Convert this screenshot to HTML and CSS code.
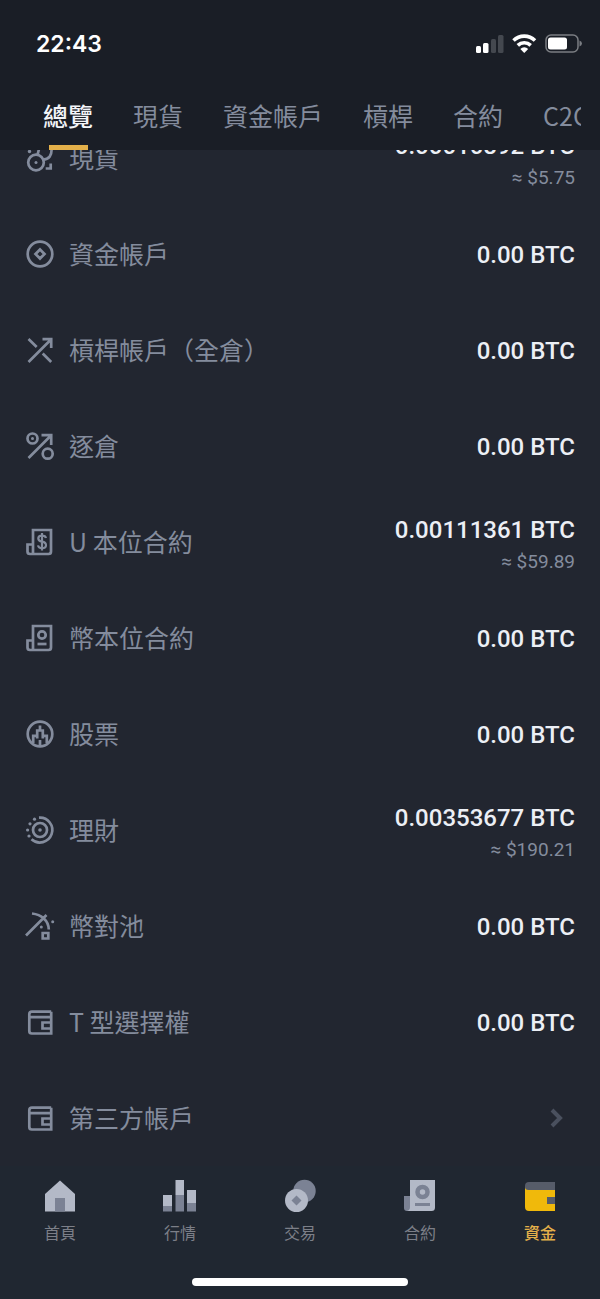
FILE: index.html
```html
<!DOCTYPE html>
<html lang="zh-Hant">
<head>
<meta charset="utf-8">
<meta name="viewport" content="width=device-width, initial-scale=1">
<title>資金總覽</title>
<link rel="stylesheet" href="styles.css">
</head>
<body>
<div class="app">
  <header class="header">
    <div class="status">
      <span class="clock">22:43</span>
      <svg class="status-icons" width="108" height="24" viewBox="0 0 108 24" aria-hidden="true">
        <g fill="#fff"><rect x="2" y="14" width="5" height="7" rx="1.5"/><rect x="9" y="11" width="5.500" height="10" rx="1.500"/></g>
        <g fill="#44484f"><rect x="17" y="7" width="5" height="14" rx="1.500"/><rect x="24" y="3" width="5.500" height="18" rx="1.500"/></g>
        <g fill="none" stroke="#fff" stroke-width="3.600"><path d="M39.500 8.500a15.500 15.500 0 0 1 21.500 0"/><path d="M43.800 13.400a9.300 9.300 0 0 1 12.900 0"/></g>
        <path d="M46.300 17a5.500 5.500 0 0 1 7.900 0l-3.950 4z" fill="#fff"/>
        <rect x="72" y="3" width="32" height="17" rx="5" fill="none" stroke="#7b7e83" stroke-width="1.500"/>
        <rect x="74" y="5.500" width="19" height="12" rx="2.500" fill="#fff"/>
        <path d="M105.500 8.500q2.500 1 2.500 3t-2.500 3z" fill="#7b7e83"/>
      </svg>
    </div>
    <nav class="tabs" aria-label="帳戶類別">
      <a class="tab active" href="#">總覽</a>
      <a class="tab" href="#">現貨</a>
      <a class="tab" href="#">資金帳戶</a>
      <a class="tab" href="#">槓桿</a>
      <a class="tab" href="#">合約</a>
      <a class="tab" href="#">C2C</a>
    </nav>
  </header>

  <main class="content">
    <ul class="accounts">
      <li class="row">
        <svg class="icon" viewBox="0 0 32 32" aria-hidden="true"><circle cx="12" cy="20.500" r="7.800"/><path d="M13.500 13l1.500-6M19 17.500c6 0 9-4 8.500-11M26.700 21.500v5h-5"/><circle class="dot" cx="12" cy="20.500" r="1.500"/><circle class="dot" cx="5.500" cy="9.500" r="1.700"/></svg>
        <span class="name">現貨</span>
        <div class="value stacked"><span class="amount">0.00010892 BTC</span><span class="fiat">≈ $5.75</span></div>
      </li>
      <li class="row">
        <svg class="icon" viewBox="0 0 32 32" aria-hidden="true"><circle cx="16" cy="16" r="12.300"/><path d="M16 11.500l4.500 4.500-4.500 4.500-4.500-4.500z"/></svg>
        <span class="name">資金帳戶</span>
        <div class="value"><span class="amount">0.00 BTC</span></div>
      </li>
      <li class="row">
        <svg class="icon" viewBox="0 0 32 32" aria-hidden="true"><path d="M4.500 5l8.200 8M4.500 28L27 5.500M18.500 5.200h8.700v8.700M18.700 19.500l8.500 8.500"/></svg>
        <span class="name">槓桿帳戶（全倉）</span>
        <div class="value"><span class="amount">0.00 BTC</span></div>
      </li>
      <li class="row">
        <svg class="icon" viewBox="0 0 32 32" aria-hidden="true"><circle cx="8.500" cy="8.500" r="5"/><circle class="dot" cx="8.500" cy="8.500" r="1.500"/><circle cx="23.700" cy="23.700" r="5"/><path d="M4.500 28L27 5.500M17.500 5.200h9.700v9.700"/></svg>
        <span class="name">逐倉</span>
        <div class="value"><span class="amount">0.00 BTC</span></div>
      </li>
      <li class="row">
        <svg class="icon" viewBox="0 0 32 32" aria-hidden="true"><path d="M9 28V4h18v21.500q0 2.500-2.500 2.500H6q-2.500 0-2.500-2.500v-7H9"/><path class="thin" d="M22 12q-.5-2.500-4-2.500-3.700 0-3.700 3 0 2.500 3.700 3.200 4 .7 4 3.500 0 3-4 3-3.500 0-4-2.800M18 7v17.500"/></svg>
        <span class="name">U 本位合約</span>
        <div class="value stacked"><span class="amount">0.00111361 BTC</span><span class="fiat">≈ $59.89</span></div>
      </li>
      <li class="row">
        <svg class="icon" viewBox="0 0 32 32" aria-hidden="true"><path d="M9 28V4h18v21.500q0 2.500-2.500 2.500H6q-2.500 0-2.500-2.500v-7H9"/><circle cx="18" cy="13" r="3.700"/><path d="M13.500 22h9"/></svg>
        <span class="name">幣本位合約</span>
        <div class="value"><span class="amount">0.00 BTC</span></div>
      </li>
      <li class="row">
        <svg class="icon" viewBox="0 0 32 32" aria-hidden="true"><circle cx="16" cy="16" r="12.300"/><path d="M9.200 25v-7.200h4v-5.300h5.600v5.300h4V25M16 7.500v5M16 22v5.500M13.200 17v3.500M18.800 17v3.500"/></svg>
        <span class="name">股票</span>
        <div class="value"><span class="amount">0.00 BTC</span></div>
      </li>
      <li class="row">
        <svg class="icon" viewBox="0 0 32 32" aria-hidden="true"><circle cx="16" cy="16" r="7"/><circle class="dot" cx="16" cy="16" r="1.800"/><path d="M15 3.700a12.400 12.400 0 1 1-7.500 21.500"/><g class="dot"><circle cx="10.500" cy="5.200" r="1.600"/><circle cx="6" cy="9.800" r="1.600"/><circle cx="3.600" cy="16" r="1.600"/><circle cx="5" cy="22" r="1.600"/></g></svg>
        <span class="name">理財</span>
        <div class="value stacked"><span class="amount">0.00353677 BTC</span><span class="fiat">≈ $190.21</span></div>
      </li>
      <li class="row">
        <svg class="icon" viewBox="0 0 32 32" aria-hidden="true"><path d="M8 3.500c9.500 1 16.500 7 16.800 16M2 25.500L20.500 7M18.700 23h5.600v5.500h-5.600zM19 8.500l3.500-3.500"/><circle class="dot" cx="28.700" cy="11.700" r="1.500"/><circle class="dot" cx="17.300" cy="17" r="1.500"/></svg>
        <span class="name">幣對池</span>
        <div class="value"><span class="amount">0.00 BTC</span></div>
      </li>
      <li class="row">
        <svg class="icon" viewBox="0 0 32 32" aria-hidden="true"><path d="M27.200 5.700H8q-2.700 0-2.700 2.600V25q0 2.500 2.500 2.500h19.400V11.200H6M27.200 5.700v6M27 16.500h-8.500v6H27"/></svg>
        <span class="name">T 型選擇權</span>
        <div class="value"><span class="amount">0.00 BTC</span></div>
      </li>
      <li class="row">
        <svg class="icon" viewBox="0 0 32 32" aria-hidden="true"><path d="M27.200 5.700H8q-2.700 0-2.700 2.600V25q0 2.500 2.500 2.500h19.400V11.200H6M27.200 5.700v6M27 16.500h-8.500v6H27"/></svg>
        <span class="name">第三方帳戶</span>
        <svg class="chevron" width="16" height="20" viewBox="0 0 16 20" aria-hidden="true"><path d="M3 2l8 8-8 8"/></svg>
      </li>
    </ul>
  </main>

  <footer class="footer">
    <nav class="bottom-nav" aria-label="主選單">
      <a class="nav-item" href="#">
        <svg width="36" height="36" viewBox="0 0 36 36" aria-hidden="true"><path fill="#b3b9c7" d="M18 2.500l15 13.500v17.500H3V16z"/><path fill="#7b8294" d="M13 20h10v13.500H13z"/></svg>
        <span>首頁</span>
      </a>
      <a class="nav-item" href="#">
        <svg width="36" height="36" viewBox="0 0 36 36" aria-hidden="true"><path fill="#b3b9c7" d="M1 17h9v11H1zM13.500 2h8.500v15h-8.500zM25 12h9v13h-9z"/><path fill="#7b8294" d="M1 28h9v5.500H1zM13.500 17h8.500v16.500h-8.500zM25 25h9v8.500h-9z"/></svg>
        <span>行情</span>
      </a>
      <a class="nav-item" href="#">
        <svg width="36" height="36" viewBox="0 0 36 36" aria-hidden="true"><circle cx="22.500" cy="13" r="11.200" fill="#7b8294"/><circle cx="14.500" cy="22.500" r="11.500" fill="#b3b9c7"/><path fill="#7b8294" d="M14.500 17.500l5 5-5 5-5-5z"/></svg>
        <span>交易</span>
      </a>
      <a class="nav-item" href="#">
        <svg width="36" height="36" viewBox="0 0 36 36" aria-hidden="true"><path fill="#7b8294" d="M2 18h7v15H5q-3 0-3-3z"/><path fill="#b3b9c7" d="M8 2h25v27.500q0 3.500-3.500 3.500H4q4 0 4-4z"/><circle cx="20.500" cy="14" r="5" fill="none" stroke="#7b8294" stroke-width="4.500"/><path fill="#7b8294" d="M13 25h15v3H13z"/></svg>
        <span>合約</span>
      </a>
      <a class="nav-item current" href="#" aria-current="page">
        <svg width="36" height="36" viewBox="0 0 36 36" aria-hidden="true"><path fill="#565c69" d="M7 4h26v9H3V8q0-4 4-4z"/><path fill="#f0b90b" d="M3 9q0 3 3.500 3H33v21H7q-4 0-4-4z"/><path fill="#565c69" d="M25 19h8v7h-8z"/></svg>
        <span>資金</span>
      </a>
    </nav>
    <div class="home-bar"></div>
  </footer>
</div>
</body>
</html>
```
FILE: styles.css
```css
* {
  box-sizing: border-box;
}

body {
  margin: 0;
  background: #222630;
  color: #848c9d;
  font-family: Roboto, "Noto Sans CJK TC", sans-serif;
}

a {
  color: inherit;
  text-decoration: none;
}

.app {
  display: flex;
  flex-direction: column;
  min-height: 100vh;
}

.header {
  position: relative;
  z-index: 1;
  background: #1a1e26;
}

.status {
  display: flex;
  align-items: center;
  justify-content: space-between;
  height: 88px;
  padding: 0 18px 0 36px;
}

.clock {
  color: #fff;
  font: 600 23px/28px Inter, sans-serif;
}

.tabs {
  display: flex;
  gap: 40px;
  height: 62px;
  margin: 0 19px 0 24px;
  padding-left: 19px;
  overflow: hidden;
}

.tab {
  position: relative;
  flex: none;
  font-size: 25px;
  line-height: 54px;
  font-family: "Noto Sans CJK TC", sans-serif;
}

.tab.active {
  color: #f2f4f8;
  font-weight: 500;
}

.tab.active::after {
  content: "";
  position: absolute;
  bottom: 0;
  left: 6px;
  right: 5px;
  height: 5px;
  background: #e3b04a;
}

.content {
  flex: 1;
  overflow: hidden;
}

/* The list is scrolled part of a row up, under the header. */
.accounts {
  margin: -40px 0 0;
  padding: 0;
  list-style: none;
}

.row {
  display: flex;
  align-items: center;
  height: 96px;
  padding: 0 25px 0 24px;
}

.icon {
  flex: none;
  width: 32px;
  height: 32px;
  margin-right: 13px;
  fill: none;
  stroke: #848c9d;
  stroke-width: 2.7;
}

.icon .thin {
  stroke-width: 2.2;
}

.icon .dot {
  fill: #848c9d;
  stroke: none;
}

.name {
  flex: 1;
  padding-bottom: 2px;
  font-size: 25px;
  line-height: 36px;
  font-family: "Noto Sans CJK TC", sans-serif;
}

.value {
  display: flex;
  flex-direction: column;
  align-items: flex-end;
  gap: 4px;
}

.value.stacked {
  padding-top: 3px;
}

.amount {
  padding-top: 2px;
  color: #eceff5;
  font-size: 24px;
  font-weight: 500;
  line-height: 30px;
}

.fiat {
  font-size: 19px;
  line-height: 26px;
}

.chevron {
  flex: none;
  margin-right: 10px;
  fill: none;
  stroke: #4a505e;
  stroke-width: 4;
}

.footer {
  padding: 12px 0 13px;
  background: #202731;
}

.bottom-nav {
  display: grid;
  grid-template-columns: repeat(5, 1fr);
}

.nav-item {
  display: flex;
  flex-direction: column;
  align-items: center;
  gap: 8px;
  font-size: 16px;
  line-height: 24px;
  color: #7c7f88;
}

.nav-item.current {
  color: #e3b04a;
  font-weight: 500;
}

.home-bar {
  width: 36%;
  height: 8px;
  margin: 32px auto 0;
  border-radius: 4px;
  background: #fff;
}
```
